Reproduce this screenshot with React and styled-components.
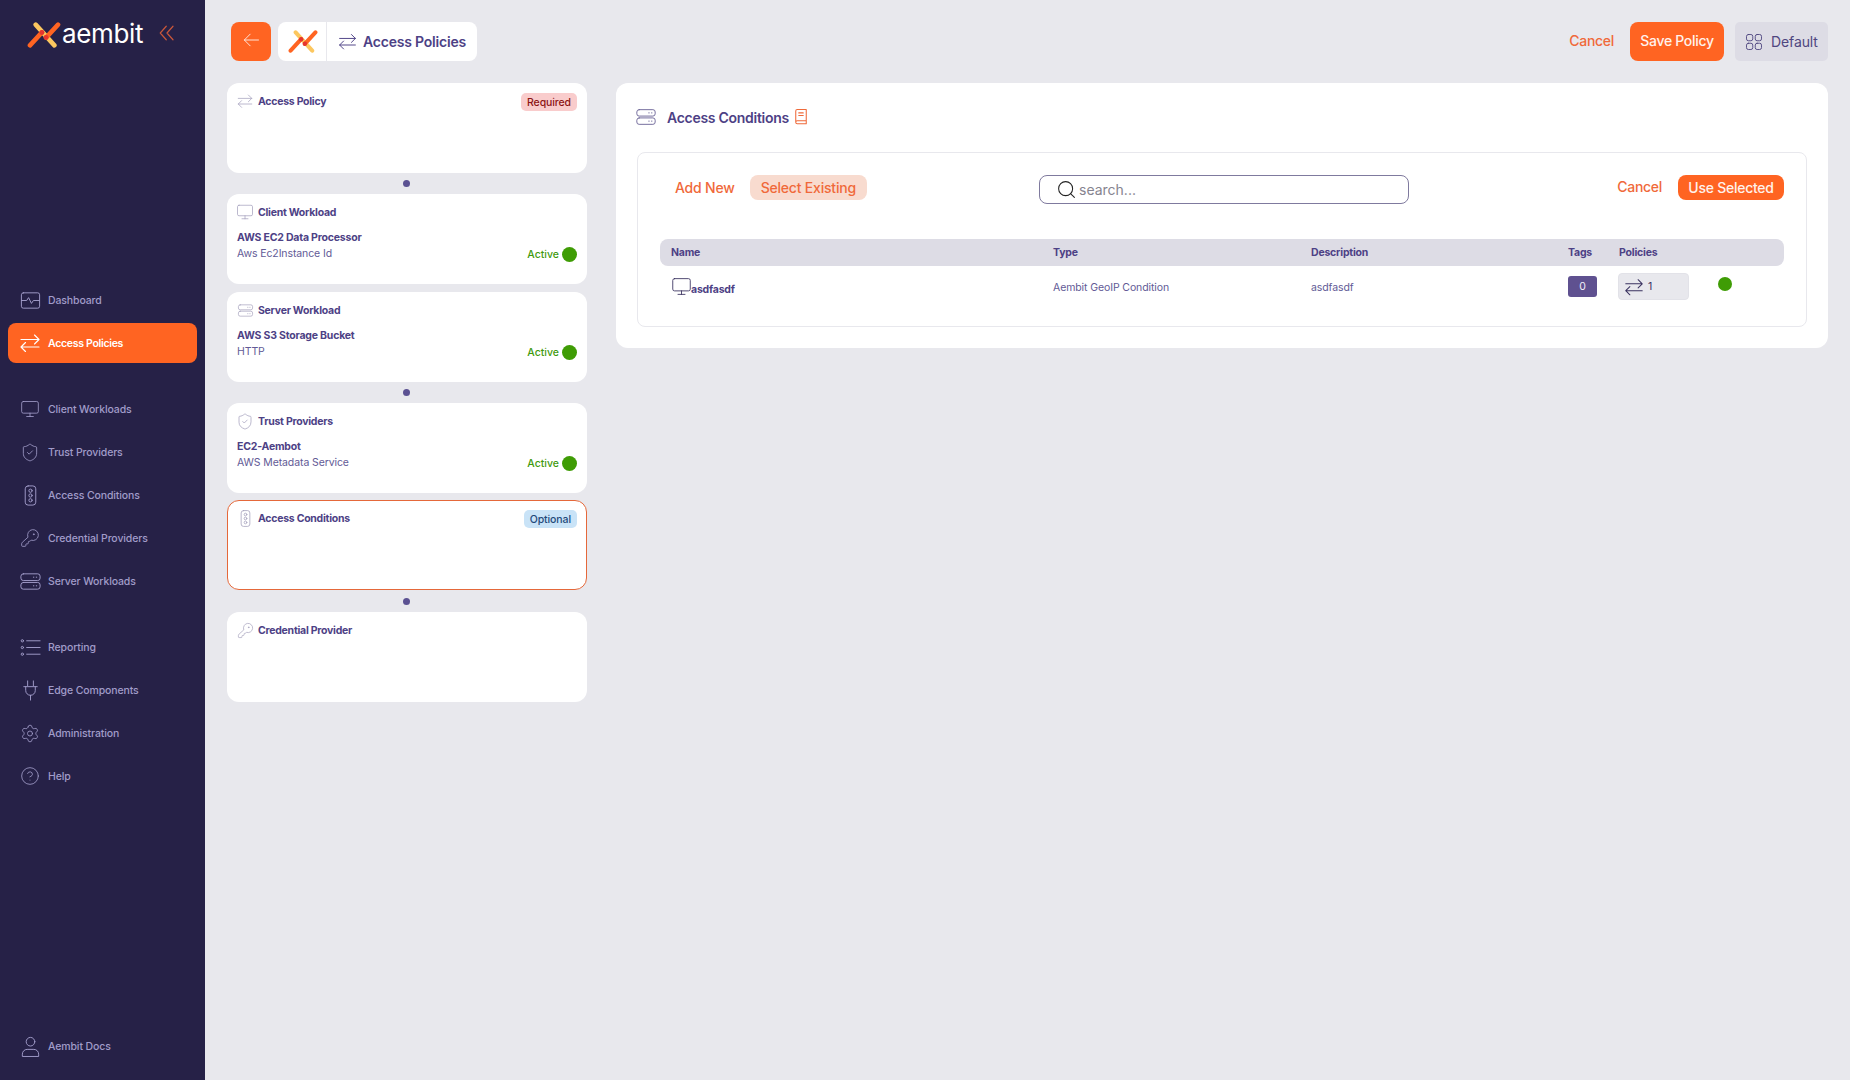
import React from 'react';
import styled, { createGlobalStyle } from 'styled-components';
import { Monitor, ShieldCheck, Settings, CircleHelp, Search, KeyRound } from 'lucide-react';

const Global = createGlobalStyle`
  html, body { margin: 0; padding: 0; background: #e8e8ed; }
  body { font-family: Inter, "Noto Sans", sans-serif; }
  * { box-sizing: border-box; }
`;

const Page = styled.div`display: flex; width: 1850px; height: 1080px; overflow: hidden; background: #e8e8ed;`;
const Sidebar = styled.aside`width: 205px; flex: none; background: #262147; display: flex; flex-direction: column; padding: 0 8px 14px;`;
const Brand = styled.div`height: 280px; padding: 22px 0 0 19px; display: flex; align-items: flex-start;`;
const BrandText = styled.span`font-family: Inter, sans-serif; font-weight: 400; font-size: 26px; line-height: 24px; letter-spacing: -0.35px; color: #fff; margin-left: 1px;`;
const Collapse = styled.span`color: #c9573a; margin: 2px 0 0 15px; display: flex;`;
const NavGroup = styled.nav`display: flex; flex-direction: column; gap: 3px; margin-bottom: 26px;`;
const NavItem = styled.div`
  height: 40px; border-radius: 8px; display: flex; align-items: center; gap: 8px; padding-left: 12px;
  font-size: 10.5px; font-weight: ${p => (p.$active ? 600 : 500)};
  letter-spacing: ${p => (p.$active ? '-0.3px' : '-0.12px')};
  color: ${p => (p.$active ? '#fff' : '#a19cc9')};
  background: ${p => (p.$active ? '#ff6422' : 'transparent')};
`;
const NavFoot = styled(NavGroup)`margin: auto 0 0;`;
const IconSlot = styled.span`width: 20px; height: 20px; flex: none; display: flex; align-items: center; justify-content: center;`;

const Content = styled.main`flex: 1; min-width: 0; padding: 22px 22px 0; display: flex; flex-direction: column; gap: 22px;`;
const TopBar = styled.header`height: 39px; padding-left: 4px; display: flex; align-items: stretch;`;
const BackButton = styled.button`width: 40px; border: 0; border-radius: 8px; background: #ff6422; color: #ffe3d6; padding: 0 0 3px; display: flex; align-items: center; justify-content: center;`;
const Crumbs = styled.div`margin-left: 7px; width: 199px; background: #fff; border-radius: 8px; display: flex; align-items: stretch;`;
const CrumbLogo = styled.div`width: 49px; padding-left: 2px; border-right: 1px solid #e8e8ed; display: flex; align-items: center; justify-content: center;`;
const CrumbTitle = styled.div`display: flex; align-items: center; gap: 5px; padding: 0 0 1px 10px; color: #4d4185; font-size: 14px; font-weight: 600; letter-spacing: -0.2px;`;
const TopActions = styled.div`margin-left: auto; display: flex; align-items: stretch;`;
const TextButton = styled.button`border: 0; background: none; padding: 0 0 2px; color: #f0693a; font: 500 14px Inter, sans-serif; letter-spacing: -0.3px; margin-right: 16px; white-space: nowrap;`;
const SaveButton = styled.button`width: 94px; border: 0; border-radius: 8px; background: #ff6422; color: #fff2ec; font: 500 14px Inter, sans-serif; letter-spacing: -0.3px; padding: 0 0 2px; white-space: nowrap;`;
const ViewButton = styled.div`margin-left: 11px; width: 93px; border-radius: 5px; background: #dddce5; color: #4f4680; display: flex; align-items: center; gap: 7px; padding-left: 9px; font-size: 14px; letter-spacing: -0.1px;`;

const Columns = styled.div`display: flex; align-items: flex-start; gap: 29px;`;
const Stack = styled.div`width: 360px; flex: none; display: flex; flex-direction: column;`;
const Card = styled.section`
  height: 90px; background: #fff; border-radius: 12px; padding: 9px 10px 0;
  border: ${p => (p.$selected ? '1px solid #e5683a' : '0')};
  ${p => p.$selected && 'padding: 8px 9px 0;'}
`;
const CardHead = styled.div`height: 18px; display: flex; align-items: center; gap: 4px; color: #4d4185; font-size: 10.5px; font-weight: 700; letter-spacing: -0.26px;`;
const CardIcon = styled.span`width: 18px; height: 18px; margin-left: -1px; flex: none; color: #a6a2bd; display: flex; align-items: center; justify-content: center;`;
const Pill = styled.span`
  margin-left: auto; margin-top: 2px; height: 18px; padding: 0 6px; border-radius: 5px; display: flex; align-items: center; font-size: 10.5px; font-weight: 500; letter-spacing: -0.1px;
  background: ${p => (p.$kind === 'required' ? '#f9cccc' : '#c9e3f7')};
  color: ${p => (p.$kind === 'required' ? '#8c1414' : '#1f4a7a')};
`;
const CardBody = styled.div`margin-top: 9px; display: flex; justify-content: space-between; align-items: flex-end;`;
const Name = styled.div`font-size: 10.5px; line-height: 16px; font-weight: 700; letter-spacing: -0.2px; color: #4d4185;`;
const Sub = styled.div`font-size: 10.5px; line-height: 16px; letter-spacing: -0.1px; color: #625a96;`;
const Status = styled.div`display: flex; align-items: center; gap: 3px; height: 16px; color: #3f9a0e; font-size: 10.5px; font-weight: 500;`;
const GreenDot = styled.span`width: 15px; height: 15px; border-radius: 50%; background: #3f9c05; flex: none;`;
const Link = styled.div`height: ${p => p.$h}px; display: flex; align-items: center; justify-content: center;`;
const LinkDot = styled.span`width: 7px; height: 7px; margin-left: -2px; border-radius: 50%; background: #5b5192;`;

const Panel = styled.section`flex: 1; min-width: 0; height: 265px; background: #fff; border-radius: 12px; padding: 20px 21px 0;`;
const PanelHead = styled.div`height: 28px; display: flex; align-items: center; color: #4d4185; font-size: 14px; font-weight: 600; letter-spacing: -0.28px;`;
const PanelIcon = styled.span`width: 30px; display: flex; align-items: center; color: #6a6296; svg { margin-left: -2px; }`;
const BookIcon = styled.span`margin-left: 3px; display: flex; color: #ef6a3a;`;
const Inner = styled.div`margin-top: 21px; height: 175px; border: 1px solid #e8e8ed; border-radius: 8px; padding: 22px 22px 0;`;
const Toolbar = styled.div`display: flex; align-items: flex-start; height: 30px;`;
const Tabs = styled.div`width: 379px; display: flex; align-items: center; height: 25px; padding-left: 15px; gap: 15px;`;
const Tab = styled.button`
  height: 25px; border: 0; border-radius: 8px; padding: 0 ${p => (p.$on ? '11px' : '0')}; white-space: nowrap;
  background: ${p => (p.$on ? '#f8dbcf' : 'transparent')}; color: #f0693a; font: 500 14px Inter, sans-serif; letter-spacing: -0.2px;
`;
const SearchBox = styled.div`width: 370px; height: 29px; border: 1px solid #7f7a9e; border-radius: 8px; display: flex; align-items: center; gap: 2px; padding-left: 16px; color: #86848f; font-size: 14px;`;
const ToolActions = styled.div`margin-left: auto; display: flex; align-items: center; height: 25px;`;
const UseButton = styled.button`width: 106px; height: 25px; border: 0; border-radius: 8px; background: #ff6422; color: #fff2ec; font: 500 14px Inter, sans-serif; letter-spacing: -0.25px; padding: 0; white-space: nowrap;`;
const Grid = `display: grid; grid-template-columns: 382px 258px 257px 51px 106px 1fr; align-items: center;`;
const TableHead = styled.div`${Grid} margin-top: 34px; height: 27px; padding-left: 11px; background: #dddce5; border-radius: 8px; color: #4d4185; font-size: 10.5px; font-weight: 700; letter-spacing: -0.2px;`;
const TableRow = styled.div`${Grid} height: 41px; padding-left: 11px; color: #625a96; font-size: 10.5px; letter-spacing: -0.1px;`;
const RowCell = styled.span`padding-top: 2px;`;
const RowName = styled.div`display: flex; align-items: flex-start; color: #4d4185; font-weight: 700; letter-spacing: -0.2px;`;
const RowNameText = styled.span`margin: 7px 0 0 -1px;`;
const RowIcon = styled.span`display: flex; color: #3a3260;`;
const TagBadge = styled.span`width: 29px; height: 21px; border-radius: 3px; background: #5f5190; color: #f1eff8; display: flex; align-items: center; justify-content: center; font-size: 10.5px;`;
const PolicyBox = styled.div`width: 71px; height: 27px; margin-left: -1px; border-radius: 4px; background: #e8e8ed; border: 1px solid #e2e2e8; display: flex; align-items: center; gap: 3px; padding-left: 4px; color: #3a3260; font-size: 10.5px;`;
const RowDot = styled(GreenDot)`width: 14px; height: 14px; margin: -5px 0 0 -7px;`;

const Svg = ({ s = 23, sw = 1, children }) => (
  <svg width={s} height={s} viewBox="0 0 24 24" fill="none" stroke="currentColor" strokeWidth={sw} strokeLinecap="round" strokeLinejoin="round" style={{ flex: 'none' }}>{children}</svg>
);
const Swap = p => <Svg {...p}><path d="M3 8.5h18M16.5 4l4.5 4.5-4.5 4.5M21 16H3M7.5 11.5 3 16l4.5 4.5" /></Svg>;
const Pulse = p => <Svg {...p}><rect x="2.5" y="4" width="19" height="16" rx="2" /><path d="M2.5 12h5.5l2-3 3 6 2-3h6.5" /></Svg>;
const Server = p => <Svg {...p}><rect x="2" y="4" width="20" height="7" rx="2.5" /><rect x="2" y="13" width="20" height="7" rx="2.5" /><path d="M15 7.5h.5M18 7.5h.5M15 16.5h.5M18 16.5h.5" /></Svg>;
const Traffic = p => <Svg {...p}><rect x="6.5" y="2" width="11" height="20" rx="3" /><circle cx="12" cy="7" r="1.7" /><circle cx="12" cy="12" r="1.7" /><circle cx="12" cy="17" r="1.7" /></Svg>;
const ListI = p => <Svg {...p}><circle cx="3.5" cy="5" r="1.2" /><circle cx="3.5" cy="12" r="1.2" /><circle cx="3.5" cy="19" r="1.2" /><path d="M8 5h14M8 12h14M8 19h14" /></Svg>;
const PlugI = p => <Svg {...p}><path d="M9 2v5M15 2v5M5 8h14M7 8v4a5 5 0 0 0 10 0V8M12 17v5" /></Svg>;
const User = p => <Svg {...p}><circle cx="12" cy="7" r="4.5" /><path d="M3.5 22v-2a5 5 0 0 1 5-5h7a5 5 0 0 1 5 5v2z" /></Svg>;
const Squares = p => <Svg {...p}><rect x="3" y="3" width="7.5" height="7.5" rx="2.2" /><rect x="13.5" y="3" width="7.5" height="7.5" rx="2.2" /><rect x="3" y="13.5" width="7.5" height="7.5" rx="2.2" /><rect x="13.5" y="13.5" width="7.5" height="7.5" rx="2.2" /></Svg>;
const Book = p => <Svg {...p}><path d="M5 19V4a2 2 0 0 1 2-2h12v15H7a2 2 0 0 0-2 2 2 2 0 0 0 2 2h12v-4" /><path d="M9 6.5h6M9 10h6" /></Svg>;
const ChevL = () => <Svg s={18} sw={1.6}><path d="M11 3l-8 9 8 9M20 3l-8 9 8 9" /></Svg>;
const ArrowL = () => <Svg s={20} sw={1.2}><path d="M21 12H4M11 5l-7 7 7 7" /></Svg>;
const Mark = ({ w, h }) => (
  <svg width={w} height={h} viewBox="7 5 32 25" fill="none" strokeLinecap="round" style={{ flex: 'none' }}>
    <path d="M15 7.5 L33 27.5" stroke="#fcc75f" strokeWidth="4.4" />
    <path d="M9.5 27.5 L21 15" stroke="#ff6422" strokeWidth="4.4" />
    <path d="M25 20 L36.5 7.5" stroke="#ff6422" strokeWidth="4.4" />
    <circle cx="21" cy="15" r="2.4" fill="#e5352f" />
    <circle cx="25" cy="20" r="2.4" fill="#e5352f" />
  </svg>
);

const lucide = (C, size, sw = 1) => <C size={size} strokeWidth={sw} />;
const NAV1 = [['Dashboard', <Pulse />], ['Access Policies', <Swap s={24} sw={1.15} />, true]];
const NAV2 = [
  ['Client Workloads', lucide(Monitor, 22)],
  ['Trust Providers', lucide(ShieldCheck, 23)],
  ['Access Conditions', <Traffic />],
  ['Credential Providers', lucide(KeyRound, 22)],
  ['Server Workloads', <Server />],
];
const NAV3 = [
  ['Reporting', <ListI />],
  ['Edge Components', <PlugI />],
  ['Administration', lucide(Settings, 21)],
  ['Help', lucide(CircleHelp, 22)],
];

const StepCard = ({ icon, title, pill, name, sub, selected }) => (
  <Card $selected={selected}>
    <CardHead>
      <CardIcon>{icon}</CardIcon>
      {title}
      {pill && <Pill $kind={pill.toLowerCase()}>{pill}</Pill>}
    </CardHead>
    {name && (
      <CardBody>
        <div><Name>{name}</Name><Sub>{sub}</Sub></div>
        <Status>Active <GreenDot /></Status>
      </CardBody>
    )}
  </Card>
);

const Items = ({ list }) => list.map(([label, icon, active]) => (
  <NavItem key={label} $active={active}><IconSlot>{icon}</IconSlot>{label}</NavItem>
));

export default function App() {
  return (
    <Page>
      <Global />
      <Sidebar>
        <Brand>
          <Mark w={34} h={26} />
          <BrandText>aembit</BrandText>
          <Collapse><ChevL /></Collapse>
        </Brand>
        <NavGroup><Items list={NAV1} /></NavGroup>
        <NavGroup><Items list={NAV2} /></NavGroup>
        <NavGroup><Items list={NAV3} /></NavGroup>
        <NavFoot><Items list={[['Aembit Docs', <User />]]} /></NavFoot>
      </Sidebar>
      <Content>
        <TopBar>
          <BackButton><ArrowL /></BackButton>
          <Crumbs>
            <CrumbLogo><Mark w={30} h={23} /></CrumbLogo>
            <CrumbTitle><Swap s={21} sw={1.1} />Access Policies</CrumbTitle>
          </Crumbs>
          <TopActions>
            <TextButton>Cancel</TextButton>
            <SaveButton>Save Policy</SaveButton>
            <ViewButton><Squares s={20} sw={1.1} />Default</ViewButton>
          </TopActions>
        </TopBar>
        <Columns>
          <Stack>
            <StepCard icon={<Swap s={18} />} title="Access Policy" pill="Required" />
            <Link $h={21}><LinkDot /></Link>
            <StepCard icon={lucide(Monitor, 18)} title="Client Workload" name="AWS EC2 Data Processor" sub="Aws Ec2Instance Id" />
            <Link $h={8} />
            <StepCard icon={<Server s={17} />} title="Server Workload" name="AWS S3 Storage Bucket" sub="HTTP" />
            <Link $h={21}><LinkDot /></Link>
            <StepCard icon={lucide(ShieldCheck, 19)} title="Trust Providers" name="EC2-Aembot" sub="AWS Metadata Service" />
            <Link $h={7} />
            <StepCard selected icon={<Traffic s={19} />} title="Access Conditions" pill="Optional" />
            <Link $h={22}><LinkDot /></Link>
            <StepCard icon={lucide(KeyRound, 17)} title="Credential Provider" />
          </Stack>
          <Panel>
            <PanelHead>
              <PanelIcon><Server s={22} /></PanelIcon>
              Access Conditions
              <BookIcon><Book s={18} sw={1.4} /></BookIcon>
            </PanelHead>
            <Inner>
              <Toolbar>
                <Tabs>
                  <Tab>Add New</Tab>
                  <Tab $on>Select Existing</Tab>
                </Tabs>
                <SearchBox><Search size={21} strokeWidth={1.2} color="#222" />search...</SearchBox>
                <ToolActions>
                  <TextButton>Cancel</TextButton>
                  <UseButton>Use Selected</UseButton>
                </ToolActions>
              </Toolbar>
              <TableHead>
                <span>Name</span><span>Type</span><span>Description</span><span>Tags</span><span>Policies</span><span />
              </TableHead>
              <TableRow>
                <RowName><RowIcon>{lucide(Monitor, 21)}</RowIcon><RowNameText>asdfasdf</RowNameText></RowName>
                <RowCell>Aembit GeoIP Condition</RowCell>
                <RowCell>asdfasdf</RowCell>
                <TagBadge>0</TagBadge>
                <PolicyBox><Swap s={22} sw={1.1} />1</PolicyBox>
                <RowDot />
              </TableRow>
            </Inner>
          </Panel>
        </Columns>
      </Content>
    </Page>
  );
}
